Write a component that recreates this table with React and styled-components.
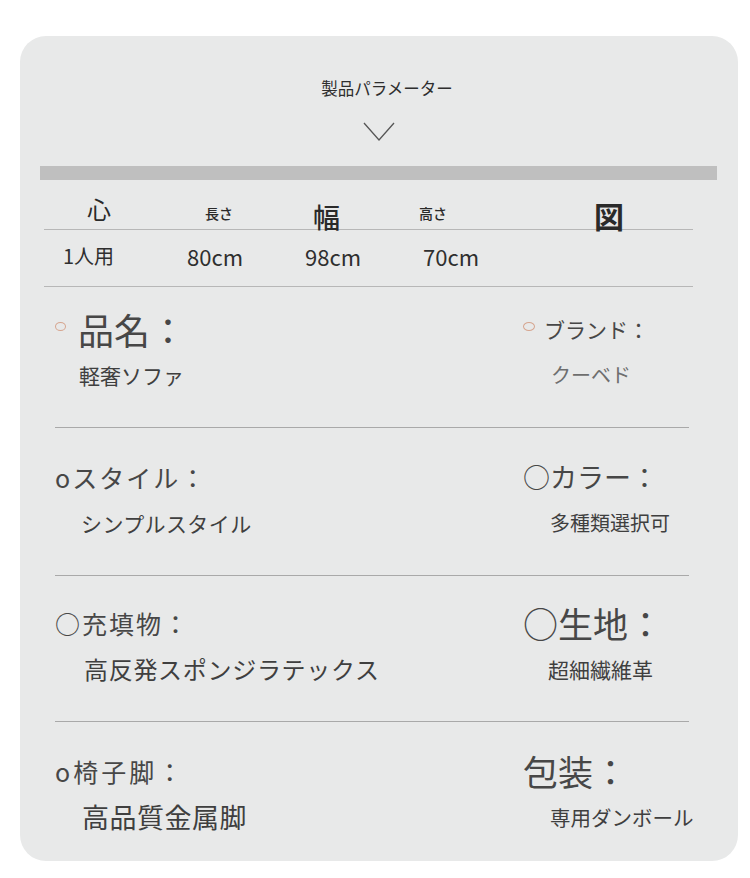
import React from 'react';
import styled, { createGlobalStyle } from 'styled-components';

const GlobalStyle = createGlobalStyle`
  html, body {
    margin: 0;
    padding: 0;
    background: #ffffff;
  }
  body {
    font-family: "Noto Sans CJK JP", "Noto Sans", sans-serif;
  }
`;

const Card = styled.section`
  margin: 36px 0 0 20px;
  width: 718px;
  box-sizing: border-box;
  padding-top: 41px;
  border-radius: 26px;
  background-color: #e8e9e9;
  display: flex;
  flex-direction: column;
`;

const Title = styled.h2`
  margin: 0;
  padding-left: 16px;
  text-align: center;
  font-size: 16.5px;
  line-height: 23px;
  font-weight: 400;
  color: #2e2e2e;
`;

const Chevron = styled.svg`
  display: block;
  align-self: center;
  margin-top: 22px;
`;

const Bar = styled.div`
  margin: 25px 0 0 20px;
  width: 677px;
  height: 14px;
  background-color: #bfbfbf;
`;

const SizeTable = styled.div`
  margin-left: 24px;
  width: 649px;
`;

const SizeRow = styled.div`
  display: grid;
  grid-template-columns: 130px 115px 115px 115px 174px;
  height: ${p => p.$height}px;
  align-items: ${p => (p.$head ? 'end' : 'center')};
  padding-bottom: ${p => (p.$head ? 0 : 5)}px;
  box-sizing: border-box;
  border-bottom: 1.5px solid #b7b7b7;
`;

const HeadCell = styled.span`
  padding-left: ${p => p.$pad}px;
  margin-bottom: ${p => p.$lift}px;
  font-size: ${p => p.$size}px;
  font-weight: ${p => p.$weight};
  line-height: 1;
  color: #2a2a2a;
`;

const ValueCell = styled.span`
  padding-left: ${p => p.$pad}px;
  font-size: ${p => p.$size}px;
  font-weight: 400;
  line-height: 1;
  color: #2f2f2f;
`;

const Section = styled.div`
  margin-left: 35px;
  width: 634px;
  display: grid;
  grid-template-columns: 468px 1fr;
  padding: ${p => p.$top}px 0 37px;
  border-bottom: 1.5px solid #a9a9a9;

  &:last-child {
    border-bottom: none;
    padding-bottom: 29px;
  }
`;

const Field = styled.div`
  display: flex;
  flex-direction: column;
  gap: 9px;
`;

const Label = styled.div`
  height: 44px;
  display: flex;
  align-items: center;
  white-space: nowrap;
  font-size: ${p => p.$size}px;
  font-weight: 400;
  letter-spacing: ${p => p.$spacing || 0}px;
  line-height: 44px;
  color: #474747;
`;

const Dot = styled.span`
  width: ${p => p.$w}px;
  height: 9px;
  margin-right: ${p => p.$gap}px;
  margin-top: -6px;
  border: 1.3px solid #d6a58f;
  border-radius: 50%;
  box-sizing: border-box;
  flex: none;
`;

const Value = styled.div`
  height: 30px;
  padding-left: ${p => p.$indent}px;
  white-space: nowrap;
  font-size: ${p => p.$size}px;
  font-weight: 400;
  letter-spacing: ${p => p.$spacing || 0}px;
  line-height: 30px;
  color: ${p => (p.$light ? '#6e6e6e' : '#3f3f3f')};
`;

const sections = [
  {
    top: 20,
    left: { dot: { w: 11, gap: 12 }, label: '品名：', size: 36, value: '軽奢ソファ', vsize: 21, indent: 24 },
    right: { dot: { w: 12, gap: 9 }, label: 'ブランド：', size: 21, value: 'クーベド', vsize: 20, indent: 28, light: true },
  },
  {
    top: 27,
    left: { label: 'oスタイル：', size: 25, spacing: 2, value: 'シンプルスタイル', vsize: 21, vspacing: 0.4, indent: 26 },
    right: { label: '○カラー：', size: 27, value: '多種類選択可', vsize: 20, indent: 27 },
  },
  {
    top: 25,
    left: { label: '○充填物：', size: 25, spacing: 2, value: '高反発スポンジラテックス', vsize: 24, vspacing: 0.7, indent: 29 },
    right: { label: '○生地：', size: 35, value: '超細繊維革', vsize: 21, indent: 25 },
  },
  {
    top: 27,
    left: { label: 'o椅子脚：', size: 25, spacing: 3, value: '高品質金属脚', vsize: 27, vspacing: 0.5, indent: 27 },
    right: { label: '包装：', size: 35, value: '専用ダンボール', vsize: 20.5, indent: 27 },
  },
];

function Item({ item }) {
  return (
    <Field>
      <Label $size={item.size} $spacing={item.spacing}>
        {item.dot && <Dot $w={item.dot.w} $gap={item.dot.gap} />}
        {item.label}
      </Label>
      <Value $size={item.vsize} $spacing={item.vspacing} $indent={item.indent} $light={item.light}>
        {item.value}
      </Value>
    </Field>
  );
}

export default function App() {
  return (
    <>
      <GlobalStyle />
      <Card>
        <Title>製品パラメーター</Title>
        <Chevron width="32" height="19" viewBox="0 0 32 19">
          <polyline points="1,1 16,18 31,1" fill="none" stroke="#555" strokeWidth="1.3" />
        </Chevron>
        <Bar />

        <SizeTable>
          <SizeRow $head $height={50}>
            <HeadCell $pad={43} $lift={8} $size={24} $weight={400}>心</HeadCell>
            <HeadCell $pad={31} $lift={9} $size={14} $weight={500}>長さ</HeadCell>
            <HeadCell $pad={24} $lift={-1} $size={27} $weight={500}>幅</HeadCell>
            <HeadCell $pad={15} $lift={9} $size={14} $weight={500}>高さ</HeadCell>
            <HeadCell $pad={75} $lift={-1} $size={30} $weight={700}>図</HeadCell>
          </SizeRow>
          <SizeRow $height={57}>
            <ValueCell $pad={19} $size={20}>1人用</ValueCell>
            <ValueCell $pad={13} $size={22}>80cm</ValueCell>
            <ValueCell $pad={16} $size={22}>98cm</ValueCell>
            <ValueCell $pad={19} $size={22}>70cm</ValueCell>
            <span />
          </SizeRow>
        </SizeTable>

        {sections.map((s, i) => (
          <Section key={i} $top={s.top}>
            <Item item={s.left} />
            <Item item={s.right} />
          </Section>
        ))}
      </Card>
    </>
  );
}
